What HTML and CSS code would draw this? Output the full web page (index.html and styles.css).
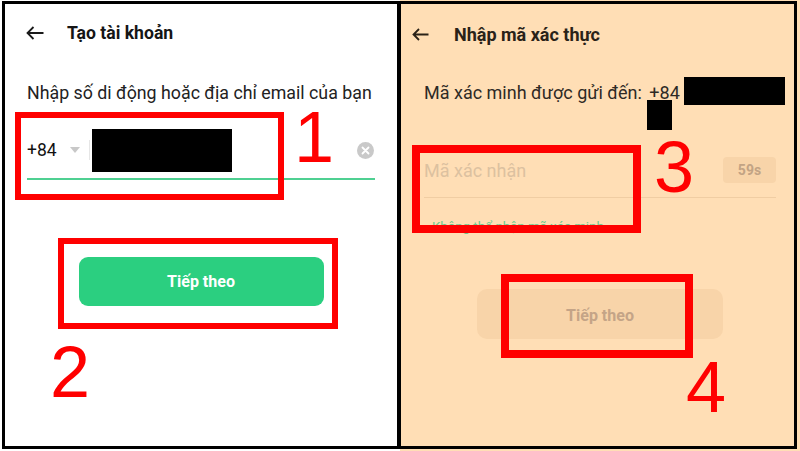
FILE: index.html
```html
<!DOCTYPE html>
<html lang="vi">
<head>
<meta charset="utf-8">
<link rel="stylesheet" href="styles.css">
</head>
<body>
<div class="frame">
  <section class="panel left">
    <div class="hdr">
      <svg class="back" width="18" height="14" viewBox="0 0 18 14"><path d="M17.5 7H1.5M7.5 1L1.5 7l6 6" fill="none" stroke="#1a1a1a" stroke-width="1.8"/></svg>
      <h1 class="title">Tạo tài khoản</h1>
    </div>
    <p class="prompt">Nhập số di động hoặc địa chỉ email của bạn</p>
    <div class="row">
      <span class="cc">+84</span>
      <span class="tri"></span>
      <span class="sep"></span>
      <span class="redact"></span>
      <span class="grow"></span>
      <svg class="clear" width="17" height="17" viewBox="0 0 17 17"><circle cx="8.5" cy="8.5" r="8.5" fill="#c9c9c9"/><path d="M5.5 5.5l6 6M11.5 5.5l-6 6" stroke="#fff" stroke-width="1.8" stroke-linecap="round"/></svg>
    </div>
    <div class="btn btn-green">Tiếp theo</div>
  </section>
  <section class="panel right">
    <div class="hdr hdr-r">
      <svg class="back" width="17" height="13" viewBox="0 0 17 13"><path d="M16.5 6.5H1.5M7 1L1.5 6.5 7 12" fill="none" stroke="#2a2218" stroke-width="1.8"/></svg>
      <h1 class="title title-r">Nhập mã xác thực</h1>
    </div>
    <p class="prompt prompt-r">Mã xác minh được gửi đến: <span class="num">+84</span></p>
    <div class="row row-r">
      <span class="ph">Mã xác nhận</span>
      <span class="grow"></span>
      <span class="pill">59s</span>
    </div>
    <p class="nocode">Không thể nhận mã xác minh</p>
    <div class="btn btn-off">Tiếp theo</div>
  </section>
</div>

<div class="blk blk-a"></div>
<div class="blk blk-b"></div>

<div class="mark m1"></div>
<div class="mark m2"></div>
<div class="mark m3"></div>
<div class="mark m4"></div>
<span class="digit d1">1</span>
<span class="digit d2">2</span>
<span class="digit d3">3</span>
<span class="digit d4">4</span>
</body>
</html>
```
FILE: styles.css
```css
html, body {
  margin: 0;
  height: 100%;
}
body {
  position: relative;
  overflow: hidden;
  background: linear-gradient(to right, #ffffff 400px, #ffdeb5 400px);
  font-family: Roboto, "Noto Sans", "Liberation Sans", sans-serif;
}
.frame {
  margin: 1px 0 0 2px;
  width: 795px;
  height: 448px;
  box-sizing: border-box;
  border: 3px solid #000;
  display: flex;
}
.panel {
  box-sizing: border-box;
  display: flex;
  flex-direction: column;
}
.left {
  width: 392px;
  background: #fff;
  padding: 0 22px;
}
.right {
  flex: 1;
  background: #ffdeb5;
  border-left: 4px solid #000;
  padding: 0 18px 0 23px;
}
.hdr {
  height: 58px;
  display: flex;
  align-items: center;
  margin-left: -1px;
}
.back { flex: none; }
.title {
  margin: 0 0 0 23px;
  font-size: 17.6px;
  font-weight: 700;
  color: #151515;
}
.prompt {
  margin: 20px 0 0;
  font-size: 17.8px;
  line-height: 22px;
  color: #222;
  white-space: nowrap;
}
.row {
  margin-top: 24px;
  height: 44px;
  padding-bottom: 6px;
  border-bottom: 2px solid #4fd092;
  display: flex;
  align-items: center;
}
.cc {
  font-size: 17.5px;
  color: #111;
}
.tri {
  margin-left: 13px;
  width: 0;
  height: 0;
  border-left: 5px solid transparent;
  border-right: 5px solid transparent;
  border-top: 6px solid #c8c8c8;
}
.sep {
  margin-left: 9px;
  width: 1px;
  height: 20px;
  background: #e6e6e6;
}
.redact {
  margin-left: 2px;
  width: 140px;
  height: 43px;
  background: #000;
}
.grow { flex: 1; }
.clear { margin-right: 1px; }
.btn {
  margin: 77px auto 0;
  width: 245px;
  height: 49px;
  border-radius: 9px;
  display: flex;
  align-items: center;
  justify-content: center;
  font-size: 16px;
  font-weight: 700;
}
.btn-green {
  background: #2bcf80;
  color: #fff;
}

/* right panel */
.hdr-r {
  height: 60px;
  margin-left: -12px;
}
.title-r {
  margin-left: 25px;
  font-size: 18px;
  color: #2a2218;
}
.prompt-r {
  margin-top: 18px;
  font-size: 18px;
  color: #2e2a25;
}
.num { margin-left: 3px; }
.row-r {
  margin-top: 53px;
  height: 26px;
  padding-bottom: 14px;
  border-bottom: 1.5px solid #f0cda3;
}
.ph {
  font-size: 18px;
  color: #dcc1a0;
}
.pill {
  width: 53px;
  height: 26px;
  border-radius: 4px;
  background: #f8d4a9;
  color: #c2a384;
  font-size: 14px;
  font-weight: 700;
  display: flex;
  align-items: center;
  justify-content: center;
}
.nocode {
  margin: 20px 0 0 8px;
  font-size: 13.3px;
  line-height: 18px;
  color: #6cc88c;
}
.btn-off {
  margin-top: 53px;
  width: 246px;
  height: 50px;
  padding-top: 2px;
  box-sizing: border-box;
  border-radius: 10px;
  background: #f8d4a9;
  color: #c4a487;
}

/* redaction overlays */
.blk {
  position: absolute;
  background: #000;
}
.blk-a { left: 684px; top: 77px; width: 101px; height: 28px; }
.blk-b { left: 647px; top: 100px; width: 25px; height: 30px; }

/* red annotations */
.mark {
  position: absolute;
  box-sizing: border-box;
  border: 6px solid #ff0000;
}
.m1 { left: 15px; top: 112px; width: 269px; height: 88px; }
.m2 { left: 58px; top: 238px; width: 280px; height: 91px; }
.m3 { left: 412px; top: 145px; width: 229px; height: 88px; border-width: 8px; }
.m4 { left: 501px; top: 274px; width: 192px; height: 84px; border-width: 8px; }
.digit {
  position: absolute;
  font-family: "Liberation Sans", Arial, sans-serif;
  font-size: 72px;
  line-height: 72px;
  color: #ff0000;
}
.d1 { left: 294px; top: 101px; }
.d2 { left: 50px; top: 336px; }
.d3 { left: 654px; top: 131px; }
.d4 { left: 686px; top: 351px; }
```
